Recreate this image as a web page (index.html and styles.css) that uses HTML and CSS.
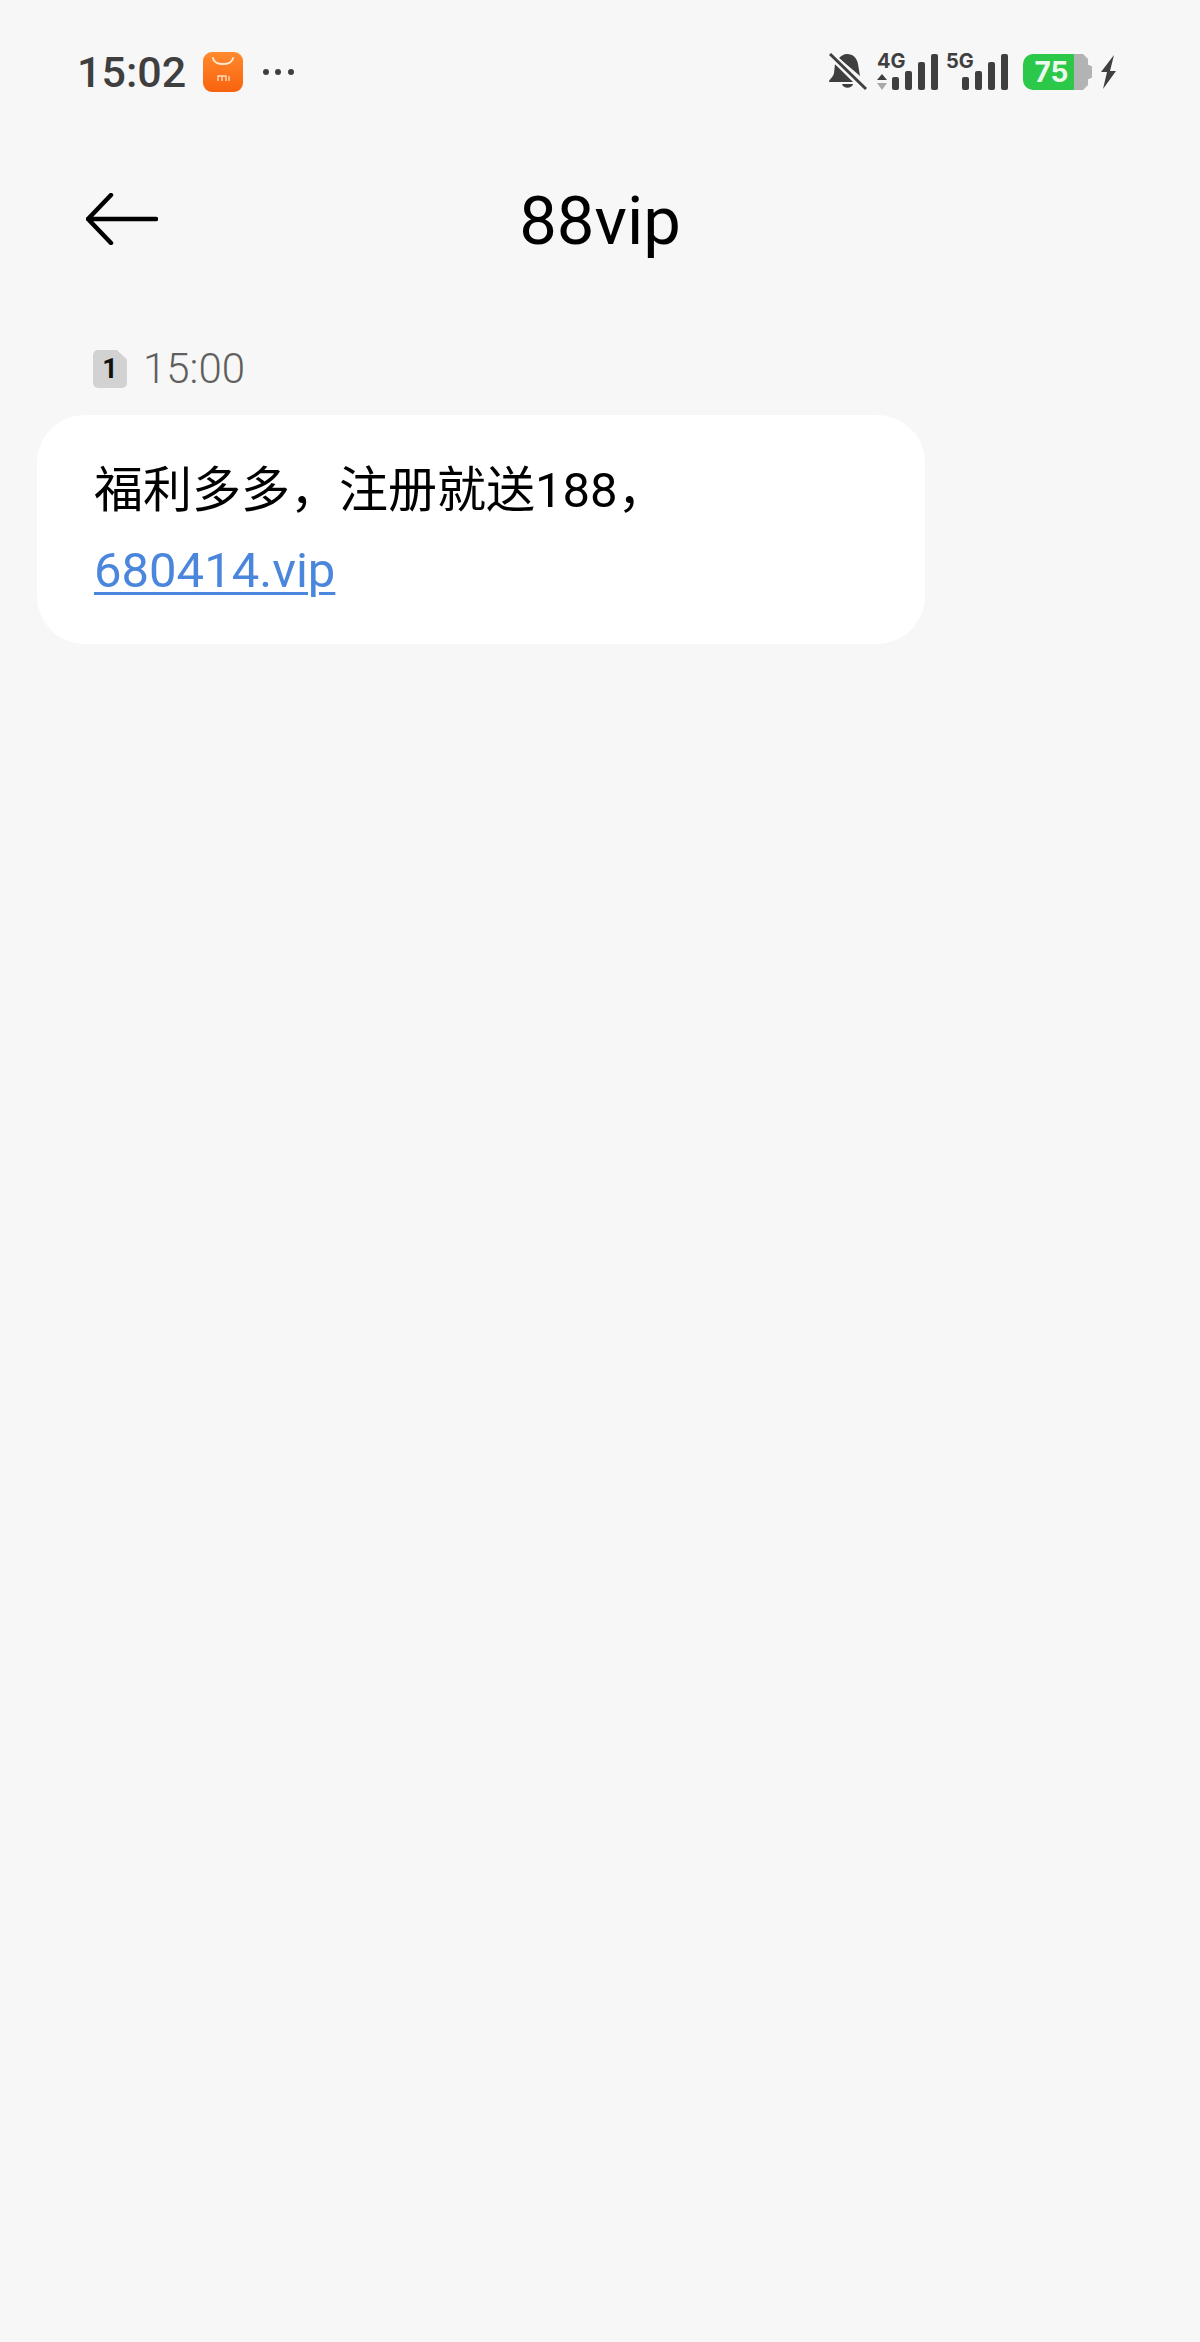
FILE: index.html
```html
<!DOCTYPE html>
<html lang="zh">
<head>
<meta charset="utf-8">
<title>88vip</title>
<link rel="stylesheet" href="styles.css">
</head>
<body>
<div class="status">
  <div class="status-left">
    <span class="clock">15:02</span>
    <svg class="app" viewBox="0 0 40 40">
      <defs><linearGradient id="o" x1="0" y1="0" x2="0" y2="1"><stop offset="0" stop-color="#ff8a2e"/><stop offset="1" stop-color="#f9620f"/></linearGradient></defs>
      <rect width="40" height="40" rx="9" fill="url(#o)"/>
      <path d="M10 6c1 8 19 8 20 0" fill="none" stroke="#ffe6cf" stroke-width="2" stroke-linecap="round"/>
      <path d="M15 29v-5h4v5M19 24h4v5M26 24v5" fill="none" stroke="#ffd9b8" stroke-width="1.4"/>
    </svg>
    <svg class="dots" viewBox="0 0 34 8"><circle cx="4" cy="4" r="3" fill="#3f3f3f"/><circle cx="16" cy="4" r="3" fill="#3f3f3f"/><circle cx="29" cy="4" r="3" fill="#3f3f3f"/></svg>
  </div>
  <div class="status-right">
    <svg class="bell" viewBox="0 0 38 38">
      <path d="M18 1c6 0 10 4 11 10l2 12L10 5c2-2 5-4 8-4zM6 11l19 18H0c0-3 4-4 5-9z" fill="#3f3f3f"/>
      <path d="M13 31h11c-1 5-10 5-11 0z" fill="#3f3f3f"/>
      <path d="M1 1l36 36" stroke="#f7f7f7" stroke-width="7"/>
      <path d="M1 1l36 35" stroke="#3f3f3f" stroke-width="3"/>
    </svg>
    <div class="net">
      <span class="gen">4G</span>
      <svg class="arrows" viewBox="0 0 10 16"><path d="M5 0l5 6H0z" fill="#3f3f3f"/><path d="M5 16l5-7H0z" fill="#a9a9a9"/></svg>
      <div class="bars"><i></i><i></i><i></i><i></i></div>
    </div>
    <div class="net net-5">
      <span class="gen">5G</span>
      <div class="bars"><i></i><i></i><i></i><i></i></div>
    </div>
    <div class="battery">
      <div class="fill">75</div>
      <div class="rest"></div>
    </div>
    <svg class="bolt" viewBox="0 0 15 34"><path d="M13 0L0 17h6L2 34l13-18H9z" fill="#3f3f3f"/></svg>
  </div>
</div>

<header class="nav">
  <svg class="back" viewBox="0 0 72 52"><path d="M25 2L2 26l23 24M2 26h68" fill="none" stroke="#000" stroke-width="4.500" stroke-linecap="round" stroke-linejoin="round"/></svg>
  <h1 class="title">88vip</h1>
</header>

<main class="thread">
  <div class="meta">
    <span class="sim">1</span>
    <span class="time">15:00</span>
  </div>
  <div class="bubble">
    <p class="line">福利多多，注册就送188，</p>
    <p class="line"><a class="link" href="#">680414.vip</a></p>
  </div>
</main>
</body>
</html>
```
FILE: styles.css
```css
* { box-sizing: border-box; }
html, body { margin: 0; height: 100%; }
body {
  background: #f7f7f7;
  font-family: Roboto, "Noto Sans CJK SC", sans-serif;
  color: #000;
}
.status {
  display: flex;
  justify-content: space-between;
  align-items: center;
  height: 72px;
  margin-top: 36px;
  padding: 0 84px 0 77px;
}
.status-left { display: flex; align-items: center; }
.clock { font-size: 43px; font-weight: 500; color: #3f3f3f; line-height: 1; }
.app { width: 40px; height: 40px; margin-left: 17px; }
.dots { width: 34px; height: 8px; margin-left: 19px; }
.status-right { display: flex; align-items: center; }
.bell { width: 38px; height: 38px; }
.net { display: grid; grid-template-columns: 10px auto; column-gap: 5px; margin-left: 10px; position: relative; width: 60px; height: 36px; align-items: end; }
.gen { position: absolute; left: 0; top: -3px; font-size: 20px; font-weight: 700; color: #3f3f3f; line-height: 1; font-family: Inter, Roboto, sans-serif; }
.arrows { width: 10px; height: 16px; }
.bars { display: flex; align-items: flex-end; gap: 6px; height: 36px; grid-column: 2; }
.bars i { display: block; width: 7px; background: #3f3f3f; border-radius: 2px; }
.bars i:nth-child(1) { height: 13px; }
.bars i:nth-child(2) { height: 19px; }
.bars i:nth-child(3) { height: 28px; }
.bars i:nth-child(4) { height: 36px; }
.net-5 { grid-template-columns: 11px auto; margin-left: 9px; width: 61px; }
.battery { display: flex; margin-left: 16px; height: 36px; align-items: center; }
.fill { width: 51px; height: 36px; background: #2cc84a; border-radius: 10px 0 0 10px; color: #eef9ee; font-size: 28px; font-weight: 700; line-height: 36px; text-align: center; padding-left: 6px; font-family: Inter, Roboto, sans-serif; }
.rest { width: 18px; height: 36px; background: #b3b3b3; clip-path: polygon(0 0, 50% 0, 78% 14%, 78% 30%, 100% 34%, 100% 66%, 78% 70%, 78% 86%, 50% 100%, 0 100%); }
.bolt { width: 15px; height: 34px; margin-left: 9px; }
.nav {
  position: relative;
  display: flex;
  align-items: center;
  justify-content: center;
  height: 76px;
  margin-top: 75px;
}
.back { position: absolute; left: 86px; top: 10px; width: 72px; height: 52px; }
.title { margin: 0; font-size: 67px; font-weight: 400; line-height: 76px; }
.thread { padding: 0 0 0 37px; margin-top: 90px; }
.meta { display: flex; align-items: center; height: 40px; padding-left: 56px; }
.sim {
  width: 34px; height: 38px;
  background: #d2d2d2;
  border-radius: 5px;
  clip-path: polygon(0 0, 70% 0, 100% 25%, 100% 100%, 0 100%);
  font-size: 27px; font-weight: 700; line-height: 38px; text-align: center; color: #111;
}
.time { margin-left: 16px; font-size: 42px; font-weight: 300; color: #5f5f5f; line-height: 40px; }
.bubble {
  width: 888px;
  height: 229px;
  margin-top: 26px;
  background: #fff;
  border-radius: 48px;
  padding: 36px 57px;
}
.line { margin: 0; font-size: 49px; line-height: 80px; font-weight: 400; }
.link { color: #4a86db; text-decoration: underline; text-decoration-thickness: 3px; text-underline-offset: 5px; }
```
